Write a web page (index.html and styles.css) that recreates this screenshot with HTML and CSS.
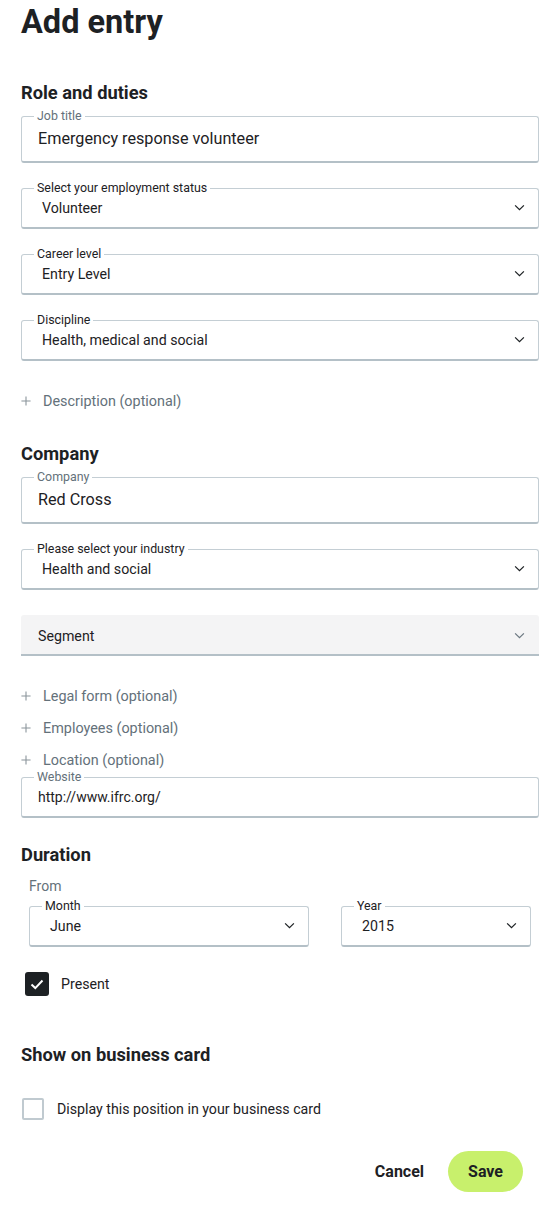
FILE: index.html
```html
<!DOCTYPE html>
<html lang="en">
<head>
    <meta charset="UTF-8">
    <meta name="viewport" content="width=device-width, initial-scale=1.0">
    <title>Add entry</title>
    <link rel="stylesheet" href="styles.css">
</head>
<body>
    <main class="form">
        <h1 class="title">Add entry</h1>

        <h2 class="group-title first">Role and duties</h2>
        <fieldset class="field">
            <legend class="muted">Job title</legend>
            <input class="text-input" type="text" value="Emergency response volunteer">
        </fieldset>
        <fieldset class="field">
            <legend>Select your employment status</legend>
            <div class="select">
                <span>Volunteer</span>
                <svg class="chevron" viewBox="0 0 12 8"><path d="M1 1.5l5 5 5-5"/></svg>
            </div>
        </fieldset>
        <fieldset class="field">
            <legend>Career level</legend>
            <div class="select">
                <span>Entry Level</span>
                <svg class="chevron" viewBox="0 0 12 8"><path d="M1 1.5l5 5 5-5"/></svg>
            </div>
        </fieldset>
        <fieldset class="field">
            <legend>Discipline</legend>
            <div class="select">
                <span>Health, medical and social</span>
                <svg class="chevron" viewBox="0 0 12 8"><path d="M1 1.5l5 5 5-5"/></svg>
            </div>
        </fieldset>
        <button class="add-link first-link">
            <svg class="plus" viewBox="0 0 12 12"><path d="M6 0.5v11M0.5 6h11"/></svg>
            Description (optional)
        </button>

        <h2 class="group-title">Company</h2>
        <fieldset class="field">
            <legend class="muted">Company</legend>
            <input class="text-input" type="text" value="Red Cross">
        </fieldset>
        <fieldset class="field">
            <legend>Please select your industry</legend>
            <div class="select">
                <span>Health and social</span>
                <svg class="chevron" viewBox="0 0 12 8"><path d="M1 1.5l5 5 5-5"/></svg>
            </div>
        </fieldset>
        <div class="select-empty">
            <span>Segment</span>
            <svg class="chevron" viewBox="0 0 12 8"><path d="M1 1.5l5 5 5-5"/></svg>
        </div>
        <button class="add-link first-link">
            <svg class="plus" viewBox="0 0 12 12"><path d="M6 0.5v11M0.5 6h11"/></svg>
            Legal form (optional)
        </button>
        <button class="add-link">
            <svg class="plus" viewBox="0 0 12 12"><path d="M6 0.5v11M0.5 6h11"/></svg>
            Employees (optional)
        </button>
        <button class="add-link">
            <svg class="plus" viewBox="0 0 12 12"><path d="M6 0.5v11M0.5 6h11"/></svg>
            Location (optional)
        </button>
        <fieldset class="field field-tight">
            <legend class="muted">Website</legend>
            <input class="text-input small" type="text" value="http://www.ifrc.org/">
        </fieldset>

        <h2 class="group-title duration-title">Duration</h2>
        <div class="date-range">
            <div class="from-label">From</div>
            <div class="date-grid">
                <fieldset class="field">
                    <legend>Month</legend>
                    <div class="select">
                        <span>June</span>
                        <svg class="chevron" viewBox="0 0 12 8"><path d="M1 1.5l5 5 5-5"/></svg>
                    </div>
                </fieldset>
                <fieldset class="field">
                    <legend>Year</legend>
                    <div class="select">
                        <span>2015</span>
                        <svg class="chevron" viewBox="0 0 12 8"><path d="M1 1.5l5 5 5-5"/></svg>
                    </div>
                </fieldset>
            </div>
        </div>
        <label class="check present">
            <span class="box checked">
                <svg viewBox="0 0 24 24"><path d="M6.5 12.5l3.8 3.6 7.2-7.6"/></svg>
            </span>
            Present
        </label>

        <h2 class="group-title card-title">Show on business card</h2>
        <label class="check card-check">
            <span class="box"></span>
            Display this position in your business card
        </label>

        <div class="actions">
            <button class="btn cancel">Cancel</button>
            <button class="btn save">Save</button>
        </div>
    </main>
</body>
</html>
```

FILE: styles.css
```css
body {
    margin: 0;
    background: #fff;
    color: #1d2124;
    font-family: Roboto, "Liberation Sans", sans-serif;
}
.form {
    width: 518px;
    padding: 0 21px;
}
.title {
    margin: 0;
    font-size: 32.5px;
    line-height: 44px;
    font-weight: 700;
}
.group-title {
    margin: 29px 0 4px;
    font-size: 18.3px;
    line-height: 24px;
    font-weight: 700;
}
.group-title.first {
    margin-top: 37px;
}
.group-title.duration-title {
    margin-top: 25px;
}
.field {
    margin: 18px 0 0;
    padding: 0 12px;
    min-width: 0;
    border: 1px solid #c4ced4;
    border-bottom: 2px solid #b4c0c7;
    border-radius: 3px;
}
.group-title + .field {
    margin-top: 0;
}
.field legend {
    padding: 0 3px;
    font-size: 12.4px;
    line-height: 14px;
    color: #1d2124;
}
.field legend.muted {
    color: #64717a;
}
.field.field-tight {
    margin-top: -2px;
}
.text-input {
    display: block;
    width: 100%;
    height: 38px;
    box-sizing: border-box;
    padding: 0 0 7px 4px;
    border: none;
    background: transparent;
    outline: none;
    font-family: inherit;
    font-size: 16.2px;
    color: #1d2124;
}
.text-input.small {
    height: 32px;
    padding-bottom: 6px;
    font-size: 14px;
}
.select {
    display: flex;
    align-items: center;
    justify-content: space-between;
    height: 32px;
    box-sizing: border-box;
    padding: 0 1px 7px 8px;
    font-size: 14.2px;
}
.chevron {
    width: 11px;
    height: 7px;
    fill: none;
    stroke: #1d2124;
    stroke-width: 1.4;
}
.select-empty {
    display: flex;
    align-items: center;
    justify-content: space-between;
    margin-top: 25px;
    height: 41px;
    padding: 2px 14px 0 17px;
    box-sizing: border-box;
    background: #f4f4f5;
    border-bottom: 2px solid #b4c0c7;
    border-radius: 3px 3px 0 0;
    font-size: 14.2px;
}
.select-empty .chevron {
    stroke: #6b7780;
}
.add-link {
    display: flex;
    align-items: center;
    gap: 12px;
    height: 24px;
    margin-top: 8px;
    padding: 0;
    border: none;
    background: none;
    font-family: inherit;
    font-size: 14.4px;
    color: #64717a;
    cursor: pointer;
}
.add-link.first-link {
    margin-top: 28px;
}
.plus {
    width: 10px;
    height: 10px;
    fill: none;
    stroke: #8a949a;
    stroke-width: 1.3;
}
.date-range {
    padding: 0 8px;
}
.from-label {
    margin-top: 9px;
    font-size: 14px;
    line-height: 20px;
    color: #64717a;
}
.date-grid {
    display: grid;
    grid-template-columns: 280px 1fr;
    column-gap: 32px;
    margin-top: 3px;
}
.date-grid .field {
    margin-top: 0;
}
.check {
    display: flex;
    align-items: center;
    font-size: 14.2px;
    cursor: pointer;
}
.present {
    gap: 12px;
    margin: 25px 0 0 4px;
}
.box {
    display: block;
    width: 22px;
    height: 22px;
    box-sizing: border-box;
    border: 2px solid #c0cad0;
    border-radius: 2px;
}
.box.checked {
    width: 24px;
    height: 24px;
    border: none;
    border-radius: 3px;
    background: #1d2124;
}
.box.checked svg {
    display: block;
    width: 24px;
    height: 24px;
    fill: none;
    stroke: #fff;
    stroke-width: 2;
}
.card-title {
    margin-top: 47px;
}
.card-check {
    gap: 13px;
    margin: 31px 0 0 1px;
}
.actions {
    display: flex;
    justify-content: flex-end;
    gap: 8px;
    margin-top: 31px;
    padding-right: 16px;
}
.btn {
    height: 41px;
    border: none;
    font-family: inherit;
    font-size: 16px;
    font-weight: 700;
    color: #1d2124;
    cursor: pointer;
}
.cancel {
    padding: 0 16px;
    background: none;
}
.save {
    padding: 0 20px;
    border-radius: 21px;
    background: #c8f06c;
}
```
